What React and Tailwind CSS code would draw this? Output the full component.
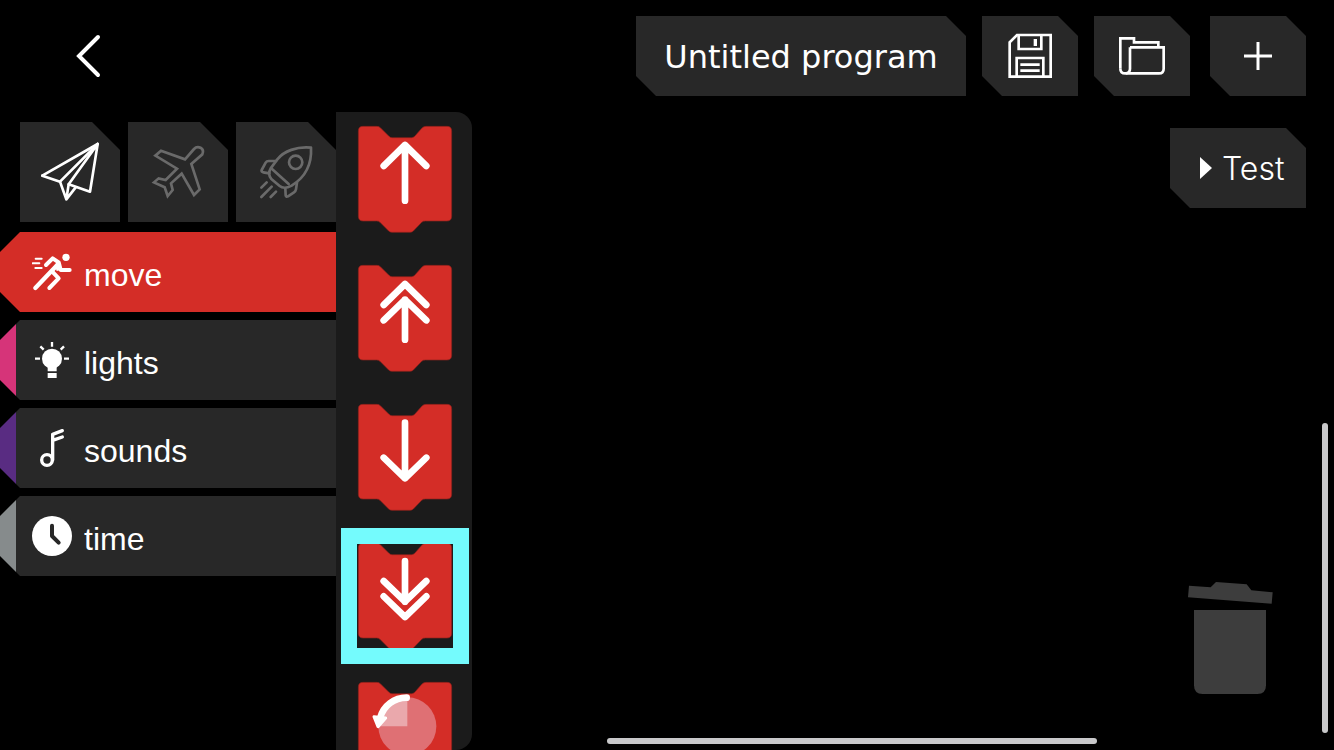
import React from "react";

const BLOCK_SHAPE =
  "M80 65 H121 Q128 65 132 69 L158 95 Q162 99 167 99 H225 Q231 99 235 95 L257 70 Q262 65 269 65 H332 Q346 65 346 79 V335 Q346 349 332 349 H267 Q260 349 256 353 L231 379 Q227 383 221 383 H167 Q161 383 157 379 L131 353 Q127 349 121 349 H80 Q66 349 66 335 V79 Q66 65 80 65 Z";

function Block({ label, selected, children }) {
  return (
    <button type="button" aria-label={label} className="relative block h-[107px] w-[94px] shrink-0">
      <svg viewBox="65 64 282 321" className="h-full w-full overflow-visible" fill="none">
        <path d={BLOCK_SHAPE} fill="#d42d27" stroke="#8c211b" strokeWidth="2" />
        <g stroke="#fff" strokeWidth="20" strokeLinecap="round" strokeLinejoin="round">
          {children}
        </g>
      </svg>
      {selected && (
        <span className="absolute -inset-x-[17px] -top-[15px] -bottom-[14px] border-[16px] border-[#74fbfd]" />
      )}
    </button>
  );
}

function ToolButton({ label, className = "", children }) {
  return (
    <button
      type="button"
      aria-label={label}
      className={`flex h-20 w-24 items-center justify-center bg-[#282828] [clip-path:polygon(0_0,calc(100%-20px)_0,100%_20px,100%_100%,20px_100%,0_60px)] ${className}`}
    >
      {children}
    </button>
  );
}

function LevelTab({ label, active, viewBox, children }) {
  return (
    <button
      type="button"
      aria-label={label}
      aria-pressed={active}
      className={`size-[100px] bg-[#282828] [clip-path:polygon(0_0,calc(100%-28px)_0,100%_28px,100%_100%,0_100%)] ${active ? "text-white" : "text-[#6a6a6a]"}`}
    >
      <svg
        viewBox={viewBox}
        className="size-full"
        fill="none"
        stroke="currentColor"
        strokeWidth="8"
        strokeLinejoin="round"
        strokeLinecap="round"
      >
        {children}
      </svg>
    </button>
  );
}

function Category({ label, strip, row, viewBox, children }) {
  return (
    <button
      type="button"
      className="flex h-20 w-full text-white [clip-path:polygon(20px_0,100%_0,100%_100%,20px_100%,0_60px,0_20px)]"
    >
      <span className={`h-full w-4 shrink-0 ${strip}`} />
      <span className={`flex h-full flex-1 items-center gap-3 pl-4 ${row}`}>
        <svg viewBox={viewBox} className="size-10 shrink-0" fill="none" stroke="#fff" strokeLinecap="round" strokeLinejoin="round">
          {children}
        </svg>
        <span className="pt-[6px] text-[32px] leading-10">{label}</span>
      </span>
    </button>
  );
}

export default function App() {
  return (
    <div className="flex h-screen flex-col overflow-hidden bg-black font-['Liberation_Sans',Arial,sans-serif] text-white">
      <header className="flex items-start justify-between pt-4 pr-7 pb-4 pl-16">
        <button type="button" aria-label="Back" className="flex h-20 w-12 items-center justify-center">
          <svg viewBox="0 0 48 48" className="size-12" fill="none" stroke="#fff" strokeWidth="4" strokeLinecap="round">
            <path d="M34 5 L15 24 L34 43" />
          </svg>
        </button>
        <div className="flex">
          <button
            type="button"
            className="mr-4 h-20 w-[330px] bg-[#282828] pt-[2px] text-center font-['DejaVu_Sans',sans-serif] text-[32px] leading-10 whitespace-nowrap [clip-path:polygon(0_0,calc(100%-20px)_0,100%_20px,100%_100%,20px_100%,0_60px)]"
          >
            Untitled program
          </button>
          <ToolButton label="Save" className="mr-4">
            <svg viewBox="108 96 144 144" className="size-12" fill="none" stroke="#fff" strokeWidth="8">
              <path d="M242 105 H141 L119 127 V230 H242 Z" />
              <path d="M146 105 V147 H214 V105" />
              <path d="M196 117 V138" strokeWidth="10" />
              <path d="M140 230 V174 H220 V230" />
              <path d="M151 194 H209 M151 212 H209" />
            </svg>
          </ToolButton>
          <ToolButton label="Open" className="mr-5">
            <svg viewBox="444 96 144 144" className="size-12" fill="none" stroke="#fff" strokeWidth="8">
              <path d="M451 206 V115 H492 V127 H565 V141" />
              <path d="M480 142 H581 V206 Q581 220 567 220 H466 Q451 220 451 206" />
              <path d="M480 142 V206 Q480 218 468 220" />
            </svg>
          </ToolButton>
          <ToolButton label="New">
            <svg viewBox="792 96 144 144" className="size-12" fill="none" stroke="#fff" strokeWidth="9">
              <path d="M864 126 V210 M822 168 H906" />
            </svg>
          </ToolButton>
        </div>
      </header>

      <div className="flex min-h-0 flex-1">
        <aside className="w-[336px] shrink-0 pt-[10px]">
          <div className="flex gap-2 pl-5">
            <LevelTab label="Paper plane" active viewBox="60 66 300 300">
              <path d="M127 227 L293 132 L270 275 L206 253 L293 132" />
              <path d="M127 227 L180 245 L293 132" />
              <path d="M180 245 L199 298 L227 262 M206 253 L199 298" />
            </LevelTab>
            <LevelTab label="Airplane" active={false} viewBox="384 66 300 300">
              <path
                strokeLinejoin="miter"
                d="M483 152 L555 178 L582 147 C593 135 615 144 607 163 L574 192 L599 268 L582 285 L545 221 L513 250 L518 270 L503 288 L494 262 L462 247 L476 235 L497 240 L531 206 L466 167 Z"
              />
            </LevelTab>
            <LevelTab label="Rocket" active={false} viewBox="708 66 300 300">
              <path d="M933 143 C890 139 852 153 832 178 L812 205 Q802 222 814 237 L839 258 Q852 269 875 257 C914 233 936 196 933 143 Z" />
              <circle cx="887" cy="187" r="20" />
              <path d="M816 207 L866 252" />
              <path d="M828 183 H806 Q800 183 797 188 L785 210 Q783 216 790 217 L808 220" />
              <path d="M856 265 L857 286 Q858 292 864 289 L882 277 Q887 274 888 268 L891 248" />
              <path d="M784 263 L800 247 M784 291 L815 260 M812 291 L828 275" />
            </LevelTab>
          </div>

          <nav className="mt-[10px] flex flex-col gap-2">
            <Category label="move" strip="bg-[#d42d27]" row="bg-[#d42d27]" viewBox="96 81 120 120">
              <circle cx="198" cy="97" r="11" fill="#fff" stroke="none" />
              <path d="M138 120 L158 100 L176 112 L182 135 H209" strokeWidth="12" />
              <path d="M174 108 L186 134 L170 138 L164 120 Z" fill="#fff" stroke="none" />
              <path d="M174 118 L106 189" strokeWidth="13" />
              <path d="M159 142 L176 160 L148 189" strokeWidth="12" />
              <path d="M107 101 H125 M98 115 H118 M106 129 H125" strokeWidth="6" />
            </Category>
            <Category label="lights" strip="bg-[#d63479]" row="bg-[#282828]" viewBox="96 345 120 120">
              <circle cx="156" cy="401" r="30" fill="#fff" stroke="none" />
              <path d="M143 422 H170 V439 H143 Z M143 444 H170 V459 H143 Z" fill="#fff" stroke="none" />
              <path
                d="M156 351 V365 M121 364 L131 374 M192 364 L182 374 M105 401 H120 M192 401 H207"
                strokeWidth="7"
                strokeLinecap="butt"
              />
            </Category>
            <Category label="sounds" strip="bg-[#592c82]" row="bg-[#282828]" viewBox="96 84 120 120">
              <circle cx="141" cy="180" r="16" strokeWidth="10" />
              <path d="M158 180 V103 L187 92 M158 121 L187 111" strokeWidth="10" />
            </Category>
            <Category label="time" strip="bg-[#868b8c]" row="bg-[#282828]" viewBox="96 348 120 120">
              <circle cx="156" cy="408" r="60" fill="#fff" stroke="none" />
              <path d="M156 377 V408 L176 428" stroke="#282828" strokeWidth="12" />
            </Category>
          </nav>
        </aside>

        <section
          aria-label="Blocks"
          className="flex w-[136px] shrink-0 flex-col items-center gap-8 overflow-hidden rounded-r-2xl bg-[#1b1b1b] pt-[14px] pl-[2px]"
        >
          <Block label="Forward">
            <path d="M206 288 V121 M142 184 L206 121 L270 184" />
          </Block>
          <Block label="Fast forward">
            <path d="M142 184 L206 121 L270 184" />
            <path d="M206 288 V168 M142 230 L206 168 L270 230" />
          </Block>
          <Block label="Backward">
            <path d="M206 120 V287 M142 225 L206 287 L270 225" />
          </Block>
          <Block label="Fast backward" selected>
            <path d="M206 118 V240 M142 178 L206 240 L270 178" />
            <path d="M142 224 L206 286 L270 224" />
          </Block>
          <Block label="Turn left">
            <circle cx="213" cy="197" r="87" fill="#df7074" stroke="none" />
            <path d="M213 197 V110 A87 87 0 0 0 126 197 Z" fill="#eaa8ac" stroke="none" />
            <path d="M211 111 C173 111 142 135 132 170" />
            <path d="M113 168 L148 172 L125 198 Z" fill="#fff" strokeWidth="9" />
          </Block>
        </section>

        <main className="relative flex-1">
          <div className="flex justify-end pt-4 pr-7">
            <button
              type="button"
              className="flex h-20 w-[136px] items-center gap-[10px] bg-[#282828] pl-[30px] font-['Inter',sans-serif] text-[32px] leading-10 font-light [clip-path:polygon(0_0,calc(100%-20px)_0,100%_20px,100%_100%,20px_100%,0_60px)]"
            >
              <svg viewBox="0 0 12 22" className="h-[22px] w-3 shrink-0" fill="#fff">
                <path d="M0 0 L12 11 L0 22 Z" />
              </svg>
              <span className="pt-[2px]">Test</span>
            </button>
          </div>

          <svg viewBox="51 60 261 345" className="absolute right-[60px] bottom-[55px] h-[115px] w-[87px]" fill="#3d3d3d" role="img" aria-label="Trash">
            <path d="M57 77 L122 82 L138 66 L230 73 L244 91 L308 97 L305 131 L54 112 Z" />
            <path d="M72 150 H288 V376 Q288 402 262 402 H98 Q72 402 72 376 Z" />
          </svg>

          <div className="absolute right-[6px] bottom-[17px] h-[310px] w-[6px] rounded-sm bg-[#c8c8ca]" />
          <div className="absolute right-[237px] bottom-[6px] h-[6px] w-[490px] rounded-sm bg-[#c8c8ca]" />
        </main>
      </div>
    </div>
  );
}
